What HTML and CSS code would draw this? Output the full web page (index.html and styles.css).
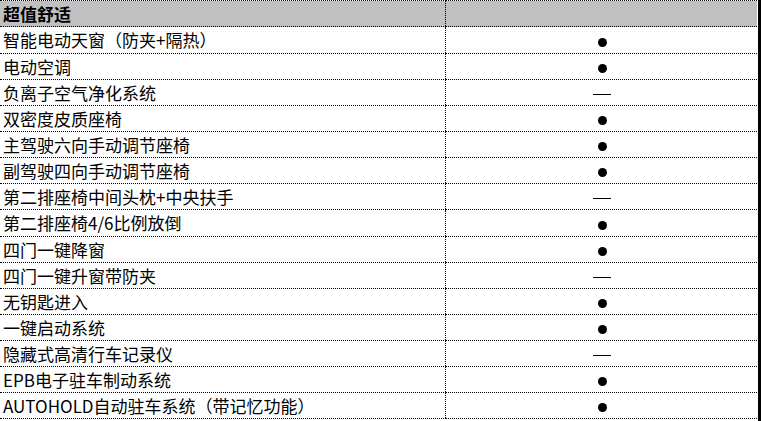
FILE: index.html
```html
<!DOCTYPE html>
<html lang="zh-CN">
<head>
<meta charset="utf-8">
<title>超值舒适</title>
<link rel="stylesheet" href="styles.css">
</head>
<body>
<div class="sheet">
<table class="spec">
<colgroup><col class="c-name"><col class="c-val"></colgroup>
<tr class="head"><td class="name">超值舒适</td><td class="val"></td></tr>
<tr class="tall"><td class="name">智能电动天窗（防夹+隔热）</td><td class="val"><span class="dot"></span></td></tr>
<tr><td class="name">电动空调</td><td class="val"><span class="dot"></span></td></tr>
<tr><td class="name">负离子空气净化系统</td><td class="val"><span class="dash"></span></td></tr>
<tr><td class="name">双密度皮质座椅</td><td class="val"><span class="dot"></span></td></tr>
<tr><td class="name">主驾驶六向手动调节座椅</td><td class="val"><span class="dot"></span></td></tr>
<tr><td class="name">副驾驶四向手动调节座椅</td><td class="val"><span class="dot"></span></td></tr>
<tr><td class="name">第二排座椅中间头枕+中央扶手</td><td class="val"><span class="dash"></span></td></tr>
<tr class="tall"><td class="name">第二排座椅4/6比例放倒</td><td class="val"><span class="dot"></span></td></tr>
<tr><td class="name">四门一键降窗</td><td class="val"><span class="dot"></span></td></tr>
<tr><td class="name">四门一键升窗带防夹</td><td class="val"><span class="dash"></span></td></tr>
<tr><td class="name">无钥匙进入</td><td class="val"><span class="dot"></span></td></tr>
<tr><td class="name">一键启动系统</td><td class="val"><span class="dot"></span></td></tr>
<tr><td class="name">隐藏式高清行车记录仪</td><td class="val"><span class="dash"></span></td></tr>
<tr><td class="name">EPB电子驻车制动系统</td><td class="val"><span class="dot"></span></td></tr>
<tr><td class="name">AUTOHOLD自动驻车系统（带记忆功能）</td><td class="val"><span class="dot"></span></td></tr>
</table>
</div>
</body>
</html>
```
FILE: styles.css
```css
html, body {
  margin: 0;
  padding: 0;
  background: #ffffff;
}
body {
  font-family: "Noto Sans CJK SC", "Microsoft YaHei", sans-serif;
  color: #000000;
}
.sheet {
  width: 758px;
  height: 421px;
  border-right: 3px solid #000000;
  overflow: hidden;
}
.spec {
  border-collapse: collapse;
  table-layout: fixed;
  width: 757px;
}
.c-name { width: 445px; }
.spec tr { height: 26px; }
.spec tr.tall { height: 27px; }
.spec td {
  border-top: 1px dotted #000000;
  border-bottom: 1px dotted #000000;
  padding: 0 0 0 3px;
  font-size: 17px;
  line-height: 20px;
  white-space: nowrap;
  vertical-align: middle;
}
.spec td.val {
  border-left: 1px dotted #000000;
  text-align: center;
  padding: 0;
}
.head td {
  background: #c0c0c0;
  font-weight: bold;
}
.dot {
  display: inline-block;
  width: 9px;
  height: 9px;
  border-radius: 50%;
  background: #000000;
  vertical-align: middle;
  margin-left: 2px;
}
.dash {
  display: inline-block;
  width: 18px;
  height: 1px;
  background: #000000;
  vertical-align: middle;
  margin-left: 2px;
}
```
